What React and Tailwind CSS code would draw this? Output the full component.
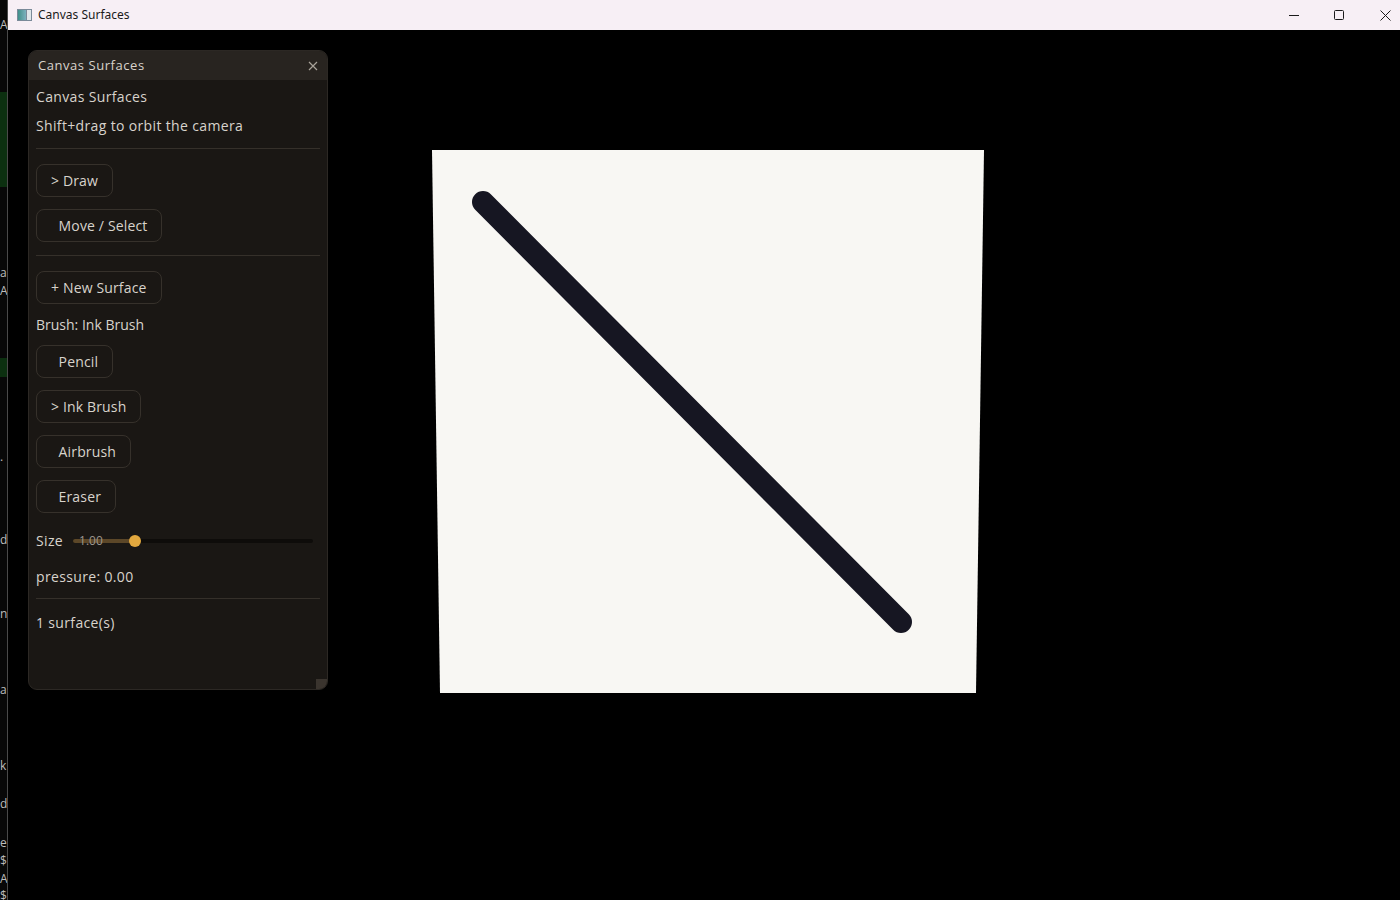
import React from "react";

const font = { fontFamily: '"Open Sans", "Noto Sans", sans-serif' };

function Btn({ children }) {
  return (
    <div className="flex">
      <div className="h-[33px] px-[14px] flex items-center rounded-[8px] border border-[#36312b] text-[14px] tracking-[0.15px] text-[#d8d3cc] whitespace-pre">
        {children}
      </div>
    </div>
  );
}

function Sep() {
  return <div className="h-px bg-[#35302a] w-[284px]" />;
}

function LeftStrip() {
  const items = [
    { t: "A", y: 18 },
    { g: true, y: 92, h: 95 },
    { t: "a", y: 266 },
    { t: "A", y: 284 },
    { g: true, y: 358, h: 19 },
    { t: ".", y: 450 },
    { t: "d", y: 533 },
    { t: "n", y: 607 },
    { t: "a", y: 683 },
    { t: "k", y: 759 },
    { t: "d", y: 797 },
    { t: "e", y: 836 },
    { t: "$", y: 854 },
    { t: "A", y: 872 },
    { t: "$", y: 889 },
  ];
  return (
    <div className="relative w-[8px] h-full bg-[#080808] border-r border-[#4a4a4a] overflow-hidden">
      {items.map((it, i) =>
        it.g ? (
          <div
            key={i}
            className="absolute left-0 w-[7px] bg-[#0c3010]"
            style={{ top: it.y, height: it.h }}
          />
        ) : (
          <div
            key={i}
            className="absolute left-0 text-[12px] leading-[13px] text-[#bdbdbd]"
            style={{ top: it.y, ...font }}
          >
            {it.t}
          </div>
        )
      )}
    </div>
  );
}

function TitleBar() {
  return (
    <div className="h-[30px] bg-[#f7eff5] flex items-center shrink-0">
      <div className="ml-[9px] w-[15px] h-[12px] border border-[#7a8a99] bg-gradient-to-r from-[#3f8f8a] to-[#9cc7df] flex">
        <div className="ml-auto w-[5px] h-full bg-[#dfe6ea] border-l border-[#7a8a99]" />
      </div>
      <div
        className="ml-[6px] text-[12px] text-[#1a1a1a]"
        style={{ fontFamily: '"Noto Sans", "Liberation Sans", sans-serif' }}
      >
        Canvas Surfaces
      </div>
      <div className="ml-auto flex items-center h-full">
        <div className="w-[45px] h-full flex items-center justify-center">
          <svg width="10" height="10" viewBox="0 0 10 10">
            <path d="M0 5.5h10" stroke="#1a1a1a" strokeWidth="1" />
          </svg>
        </div>
        <div className="w-[46px] h-full flex items-center justify-center">
          <svg width="10" height="10" viewBox="0 0 10 10">
            <rect x="0.5" y="0.5" width="9" height="9" rx="1" fill="none" stroke="#1a1a1a" strokeWidth="1" />
          </svg>
        </div>
        <div className="ml-[8px] w-[30px] h-full flex items-center justify-center">
          <svg width="11" height="11" viewBox="0 0 11 11">
            <path d="M0.5 0.5l10 10M10.5 0.5l-10 10" stroke="#1a1a1a" strokeWidth="1" />
          </svg>
        </div>
      </div>
    </div>
  );
}

function Panel() {
  return (
    <div
      className="absolute left-[20px] top-[20px] w-[300px] h-[640px] rounded-[9px] bg-[#1a1714] border border-[#2c2824] flex flex-col overflow-hidden"
      style={font}
    >
      <div className="h-[29px] bg-[#282420] flex items-center px-[9px] shrink-0">
        <div className="text-[13px] text-[#d8d3cc] tracking-[0.55px]">Canvas Surfaces</div>
        <svg className="ml-auto" width="10" height="10" viewBox="0 0 10 10">
          <path d="M1 1l8 8M9 1l-8 8" stroke="#a8a29a" strokeWidth="1.2" />
        </svg>
      </div>
      <div className="flex flex-col px-[7px] text-[14px] tracking-[0.35px] text-[#d8d3cc]">
        <div className="mt-[7px] leading-[20px]">Canvas Surfaces</div>
        <div className="mt-[9px] leading-[20px]">Shift+drag to orbit the camera</div>
        <div className="mt-[12px]"><Sep /></div>
        <div className="mt-[15px] flex flex-col gap-[12px]">
          <Btn>{"> Draw"}</Btn>
          <Btn>{"  Move / Select"}</Btn>
        </div>
        <div className="mt-[13px]"><Sep /></div>
        <div className="mt-[15px]">
          <Btn>{"+ New Surface"}</Btn>
        </div>
        <div className="mt-[11px] leading-[20px] tracking-normal">Brush: Ink Brush</div>
        <div className="mt-[10px] flex flex-col gap-[12px]">
          <Btn>{"  Pencil"}</Btn>
          <Btn>{"> Ink Brush"}</Btn>
          <Btn>{"  Airbrush"}</Btn>
          <Btn>{"  Eraser"}</Btn>
        </div>
        <div className="mt-[18px] h-[20px] flex items-center">
          <div className="leading-[20px]">Size</div>
          <div className="relative ml-[10px] w-[240px] h-[12px] flex items-center">
            <div className="w-full h-[4px] rounded-full bg-[#0e0c0a] flex">
              <div className="w-[62px] h-full rounded-l-full bg-[#5c4728]" />
            </div>
            <div className="absolute left-[56px] top-0 w-[12px] h-[12px] rounded-full bg-[#e2a83e]" />
            <div className="absolute left-[6px] top-[-3px] text-[12px] leading-[18px] tracking-normal text-[#9e978e]">1.00</div>
          </div>
        </div>
        <div className="mt-[16px] leading-[20px]">pressure: 0.00</div>
        <div className="mt-[11px]"><Sep /></div>
        <div className="mt-[14px] leading-[20px]">1 surface(s)</div>
      </div>
      <div className="mt-auto ml-auto w-[11px] h-[10px] bg-[#3a342e]" />
    </div>
  );
}

function Scene() {
  return (
    <svg className="absolute inset-0" width="1392" height="870" viewBox="0 0 1392 870">
      <polygon points="424,120 976,120 968,663 432,663" fill="#f8f7f3" />
      <line
        x1="475"
        y1="172"
        x2="893"
        y2="592"
        stroke="#161622"
        strokeWidth="22"
        strokeLinecap="round"
      />
    </svg>
  );
}

export default function App() {
  return (
    <div className="w-[1400px] h-[900px] flex bg-black overflow-hidden">
      <LeftStrip />
      <div className="flex-1 flex flex-col">
        <TitleBar />
        <div className="relative flex-1 bg-black">
          <Scene />
          <Panel />
        </div>
      </div>
    </div>
  );
}
